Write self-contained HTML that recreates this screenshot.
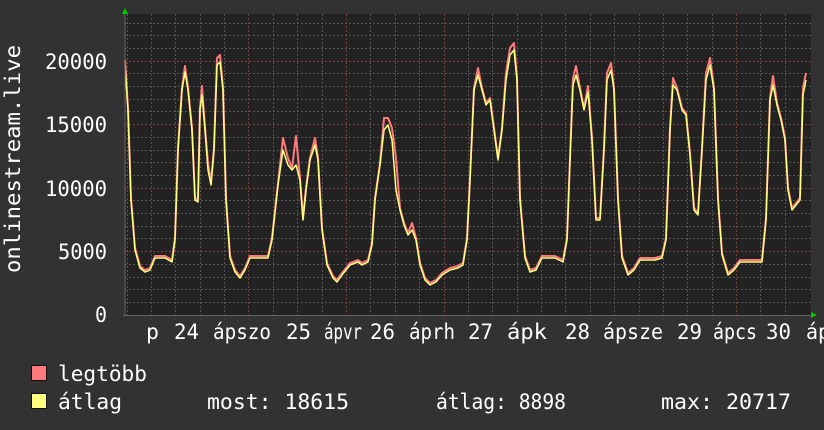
<!DOCTYPE html>
<html><head><meta charset="utf-8"><style>
html,body{margin:0;padding:0;background:#333;}
svg{display:block;font-family:"DejaVu Sans Mono","Liberation Mono",monospace;}
</style></head><body>
<svg width="824" height="430" viewBox="0 0 824 430" xmlns="http://www.w3.org/2000/svg">
<rect width="824" height="430" fill="#323232"/>
<rect x="125" y="14" width="686" height="301" fill="#222"/>
<g stroke="#555" stroke-width="1" stroke-dasharray="2,2">
<line x1="125" y1="302.5" x2="811" y2="302.5"/><line x1="125" y1="289.5" x2="811" y2="289.5"/><line x1="125" y1="277.5" x2="811" y2="277.5"/><line x1="125" y1="264.5" x2="811" y2="264.5"/>
<line x1="125" y1="238.5" x2="811" y2="238.5"/><line x1="125" y1="226.5" x2="811" y2="226.5"/><line x1="125" y1="213.5" x2="811" y2="213.5"/><line x1="125" y1="200.5" x2="811" y2="200.5"/>
<line x1="125" y1="175.5" x2="811" y2="175.5"/><line x1="125" y1="162.5" x2="811" y2="162.5"/><line x1="125" y1="150.5" x2="811" y2="150.5"/><line x1="125" y1="137.5" x2="811" y2="137.5"/>
<line x1="125" y1="111.5" x2="811" y2="111.5"/><line x1="125" y1="99.5" x2="811" y2="99.5"/><line x1="125" y1="86.5" x2="811" y2="86.5"/><line x1="125" y1="73.5" x2="811" y2="73.5"/>
<line x1="125" y1="48.5" x2="811" y2="48.5"/><line x1="125" y1="35.5" x2="811" y2="35.5"/><line x1="125" y1="23.5" x2="811" y2="23.5"/>
<line x1="127.5" y1="14" x2="127.5" y2="315"/><line x1="175.5" y1="14" x2="175.5" y2="315"/><line x1="200.5" y1="14" x2="200.5" y2="315"/><line x1="224.5" y1="14" x2="224.5" y2="315"/>
<line x1="273.5" y1="14" x2="273.5" y2="315"/><line x1="297.5" y1="14" x2="297.5" y2="315"/><line x1="322.5" y1="14" x2="322.5" y2="315"/>
<line x1="370.5" y1="14" x2="370.5" y2="315"/><line x1="395.5" y1="14" x2="395.5" y2="315"/><line x1="419.5" y1="14" x2="419.5" y2="315"/>
<line x1="468.5" y1="14" x2="468.5" y2="315"/><line x1="492.5" y1="14" x2="492.5" y2="315"/><line x1="517.5" y1="14" x2="517.5" y2="315"/>
<line x1="565.5" y1="14" x2="565.5" y2="315"/><line x1="590.5" y1="14" x2="590.5" y2="315"/><line x1="614.5" y1="14" x2="614.5" y2="315"/>
<line x1="663.5" y1="14" x2="663.5" y2="315"/><line x1="687.5" y1="14" x2="687.5" y2="315"/><line x1="712.5" y1="14" x2="712.5" y2="315"/>
<line x1="760.5" y1="14" x2="760.5" y2="315"/><line x1="785.5" y1="14" x2="785.5" y2="315"/>
</g>
<g stroke="#7a4040" stroke-width="1" stroke-dasharray="2,2">
<line x1="125" y1="251.5" x2="811" y2="251.5"/><line x1="125" y1="188.5" x2="811" y2="188.5"/><line x1="125" y1="124.5" x2="811" y2="124.5"/><line x1="125" y1="61.5" x2="811" y2="61.5"/>
<line x1="151.5" y1="14" x2="151.5" y2="315"/><line x1="248.5" y1="14" x2="248.5" y2="315"/><line x1="346.5" y1="14" x2="346.5" y2="315"/><line x1="444.5" y1="14" x2="444.5" y2="315"/><line x1="541.5" y1="14" x2="541.5" y2="315"/><line x1="639.5" y1="14" x2="639.5" y2="315"/><line x1="736.5" y1="14" x2="736.5" y2="315"/>
</g>
<polyline fill="none" stroke="#ff7b7b" stroke-width="2" stroke-linejoin="round" transform="translate(0,-2)" points="125,62 128,110 131,200 135,250 140,268 145,272 150,270 155,258 165,258 172,262 175,240 178,150 182,90 185,68 188,90 192,130 195,200 198,202 200,110 202,88 205,130 208,165 211,185 214,150 217,60 220,57 223,90 226,200 230,258 235,272 240,278 245,270 250,258 258,258 268,258 272,240 278,185 283,140 288,160 292,170 296,138 300,180 303,220 306,190 310,160 315,140 318,160 322,230 327,265 333,278 337,282 342,275 350,265 358,262 362,265 368,262 372,245 375,200 380,165 384,120 388,120 392,130 396,160 400,210 404,225 408,235 412,225 416,240 420,265 425,280 430,285 436,282 442,275 450,270 458,268 463,265 467,240 470,180 474,90 478,70 482,90 486,105 490,100 494,130 498,160 502,130 506,75 510,50 514,45 517,80 520,200 525,258 530,272 536,270 542,258 555,258 563,262 567,240 570,160 573,80 576,68 580,90 584,110 588,88 592,140 596,220 600,220 604,150 607,75 611,65 614,90 618,200 622,258 628,275 634,270 640,260 655,260 662,258 666,240 670,130 673,80 677,90 682,110 686,115 690,155 694,210 698,215 702,150 706,75 710,60 714,90 718,200 722,255 728,275 734,270 740,262 755,262 762,262 766,220 770,100 773,78 777,105 781,120 785,140 788,190 792,210 796,205 800,200 803,90 806,75"/>
<polyline fill="none" stroke="#ffff80" stroke-width="1.5" stroke-linejoin="round" points="125,65 128,110 131,200 135,250 140,268 145,272 150,270 155,258 165,258 172,262 175,240 178,150 182,90 185,72 188,90 192,130 195,200 198,202 200,110 202,95 205,130 208,170 211,185 214,150 217,65 220,62 223,90 226,200 230,258 235,272 240,278 245,270 250,258 258,258 268,258 272,240 278,185 283,150 288,165 292,170 296,165 300,180 303,220 306,190 310,160 315,145 318,160 322,230 327,265 333,278 337,282 342,275 350,265 358,262 362,265 368,262 372,245 375,200 380,165 384,130 388,125 392,140 396,190 400,210 404,225 408,235 412,230 416,240 420,265 425,280 430,285 436,282 442,275 450,270 458,268 463,265 467,240 470,180 474,90 478,75 482,90 486,105 490,100 494,130 498,160 502,130 506,80 510,55 514,50 517,80 520,200 525,258 530,272 536,270 542,258 555,258 563,262 567,240 570,160 573,85 576,75 580,90 584,110 588,92 592,140 596,220 600,220 604,150 607,80 611,70 614,90 618,200 622,258 628,275 634,270 640,260 655,260 662,258 666,240 670,130 673,85 677,90 682,110 686,115 690,155 694,210 698,215 702,150 706,80 710,65 714,90 718,200 722,255 728,275 734,270 740,262 755,262 762,262 766,220 770,100 773,85 777,105 781,120 785,140 788,190 792,210 796,205 800,200 803,95 806,80"/>
<line x1="125" y1="12" x2="125" y2="315" stroke="#666"/>
<line x1="123" y1="315.5" x2="813" y2="315.5" stroke="#666"/>
<polygon points="122,14 128,14 125,8" fill="#0c0"/>
<polygon points="811,312 811,318 817,315" fill="#0c0"/>
<g fill="#fff" font-size="21">
<text x="45" y="69" textLength="62" lengthAdjust="spacingAndGlyphs">20000</text>
<text x="45" y="132" textLength="62" lengthAdjust="spacingAndGlyphs">15000</text>
<text x="45" y="196" textLength="62" lengthAdjust="spacingAndGlyphs">10000</text>
<text x="58" y="259" textLength="49" lengthAdjust="spacingAndGlyphs">5000</text>
<text x="95" y="322" textLength="12" lengthAdjust="spacingAndGlyphs">0</text>
</g>
<text transform="translate(20,273) rotate(-90)" fill="#fff" font-size="21" textLength="228" lengthAdjust="spacingAndGlyphs">onlinestream.live</text>
<g fill="#fff" font-size="21">
<text x="146" y="339" textLength="13" lengthAdjust="spacingAndGlyphs">p</text>
<text x="174" y="339" textLength="25" lengthAdjust="spacingAndGlyphs">24</text>
<text x="213" y="339" textLength="58" lengthAdjust="spacingAndGlyphs">ápszo</text>
<text x="286" y="339" textLength="25" lengthAdjust="spacingAndGlyphs">25</text>
<text x="324" y="339" textLength="38" lengthAdjust="spacingAndGlyphs">ápvr</text>
<text x="370" y="339" textLength="25" lengthAdjust="spacingAndGlyphs">26</text>
<text x="409" y="339" textLength="46" lengthAdjust="spacingAndGlyphs">áprh</text>
<text x="468" y="339" textLength="25" lengthAdjust="spacingAndGlyphs">27</text>
<text x="507" y="339" textLength="40" lengthAdjust="spacingAndGlyphs">ápk</text>
<text x="565" y="339" textLength="25" lengthAdjust="spacingAndGlyphs">28</text>
<text x="603" y="339" textLength="60" lengthAdjust="spacingAndGlyphs">ápsze</text>
<text x="677" y="339" textLength="25" lengthAdjust="spacingAndGlyphs">29</text>
<text x="713" y="339" textLength="44" lengthAdjust="spacingAndGlyphs">ápcs</text>
<text x="766" y="339" textLength="25" lengthAdjust="spacingAndGlyphs">30</text>
<text x="806" y="339" textLength="24" lengthAdjust="spacingAndGlyphs">áp</text>
</g>
<rect x="31.5" y="365.5" width="15" height="15" fill="#ff7b7b" stroke="#111"/>
<rect x="31.5" y="393.5" width="15" height="15" fill="#ffff80" stroke="#111"/>
<g fill="#fff" font-size="21">
<text x="58" y="381" textLength="89" lengthAdjust="spacingAndGlyphs">legtöbb</text>
<text x="58" y="409" textLength="64" lengthAdjust="spacingAndGlyphs">átlag</text>
<text x="207" y="409" textLength="142" lengthAdjust="spacingAndGlyphs">most: 18615</text>
<text x="436" y="409" textLength="130" lengthAdjust="spacingAndGlyphs">átlag: 8898</text>
<text x="661" y="409" textLength="130" lengthAdjust="spacingAndGlyphs">max: 20717</text>
</g>
</svg>
</body></html>
